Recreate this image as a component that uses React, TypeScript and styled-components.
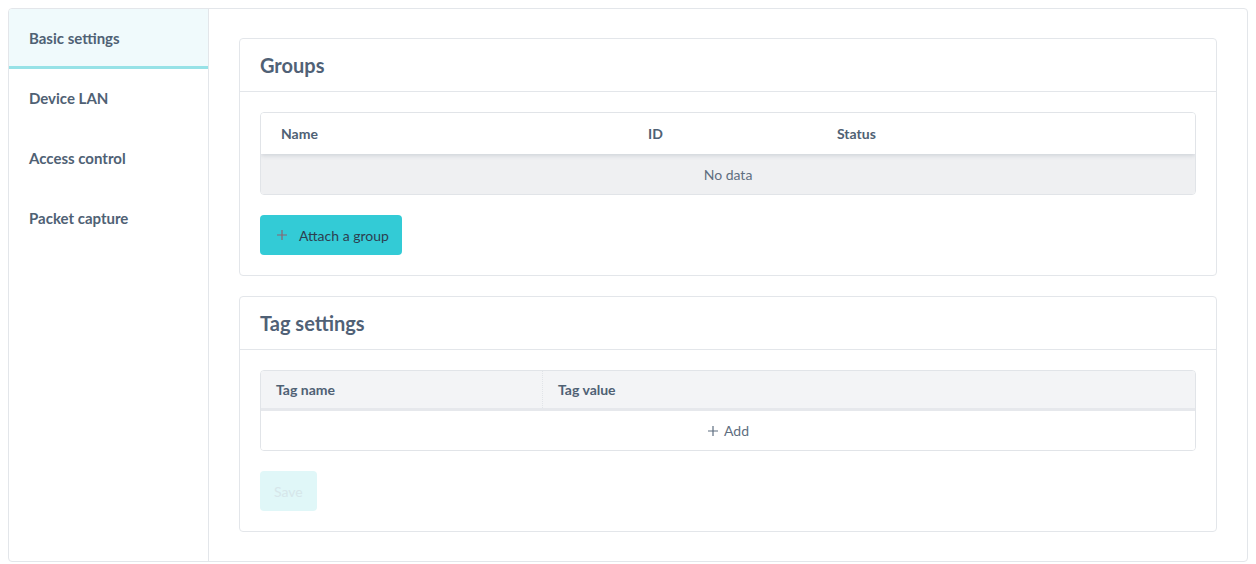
import React from 'react';
import styled, { createGlobalStyle } from 'styled-components';

const GlobalStyle = createGlobalStyle`
  html, body {
    margin: 0;
    padding: 0;
    background: #fff;
  }
  body {
    padding: 8px;
    font-family: Lato, "Open Sans", sans-serif;
    color: #506176;
  }
  * {
    box-sizing: border-box;
  }
`;

const Frame = styled.div`
  display: flex;
  width: 1240px;
  height: 554px;
  border: 1px solid #e3e6ea;
  border-radius: 4px;
  overflow: hidden;
`;

const Sidebar = styled.nav`
  width: 200px;
  flex-shrink: 0;
  border-right: 1px solid #e3e6ea;
  display: flex;
  flex-direction: column;
`;

const NavItem = styled.div<{ $active?: boolean }>`
  height: 60px;
  display: flex;
  align-items: center;
  padding: 1px 0 0 20px;
  font-size: 15px;
  font-weight: 700;
  color: #4f6174;
  background: ${(p) => (p.$active ? '#f0fafc' : 'transparent')};
  border-bottom: 3px solid ${(p) => (p.$active ? '#97e2e7' : 'transparent')};
`;

const Main = styled.main`
  flex: 1;
  padding: 29px 30px 30px 30px;
  display: flex;
  flex-direction: column;
  gap: 20px;
`;

const Card = styled.section`
  border: 1px solid #e3e6ea;
  border-radius: 4px;
  background: #fff;
`;

const CardHeader = styled.header`
  height: 53px;
  display: flex;
  align-items: center;
  padding: 0 20px;
  border-bottom: 1px solid #e3e6ea;
  font-size: 20px;
  font-weight: 700;
  color: #506176;
`;

const CardBody = styled.div`
  padding: 20px;
  display: flex;
  flex-direction: column;
  align-items: flex-start;
  gap: 20px;
`;

const Table = styled.div`
  width: 100%;
  border: 1px solid #e1e4e8;
  border-radius: 4px;
  overflow: hidden;
`;

const HeadRow = styled.div<{ $shaded?: boolean }>`
  display: grid;
  grid-template-columns: ${(p) => (p.$shaded ? '281px 1fr' : '367px 189px 1fr')};
  height: ${(p) => (p.$shaded ? '40px' : '41px')};
  align-items: center;
  background: ${(p) => (p.$shaded ? '#f3f4f6' : '#fff')};
  border-bottom: ${(p) => (p.$shaded ? '3px solid #e6e8ec' : 'none')};
  position: relative;
  z-index: 1;
  box-shadow: ${(p) => (p.$shaded ? 'none' : '0 2px 4px rgba(80, 97, 118, 0.18)')};
`;

const HeadCell = styled.div<{ $divider?: boolean; $pad?: number }>`
  height: 100%;
  display: flex;
  align-items: center;
  padding-left: ${(p) => p.$pad ?? 20}px;
  font-size: 14px;
  font-weight: 700;
  color: #4f6174;
  border-left: ${(p) => (p.$divider ? '1px dotted #e1e4e8' : 'none')};
`;

const EmptyRow = styled.div<{ $grey?: boolean }>`
  height: ${(p) => (p.$grey ? '40px' : '39px')};
  display: flex;
  align-items: center;
  justify-content: center;
  gap: 5px;
  font-size: 14px;
  color: #5e6e80;
  background: ${(p) => (p.$grey ? '#eff0f2' : '#fff')};
`;

const Button = styled.button<{ $disabled?: boolean }>`
  display: inline-flex;
  align-items: center;
  gap: 11px;
  height: 40px;
  padding: 0 ${(p) => (p.$disabled ? '14px' : '13px')} 0 ${(p) => (p.$disabled ? '14px' : '16px')};
  border: none;
  border-radius: 4px;
  font-family: inherit;
  font-size: 14px;
  color: ${(p) => (p.$disabled ? '#d6e6ea' : '#2d3e50')};
  background: ${(p) => (p.$disabled ? '#e0f7f8' : '#33cbd6')};
  cursor: ${(p) => (p.$disabled ? 'default' : 'pointer')};
`;

const PlusIcon = ({ color, size = 12 }: { color: string; size?: number }) => (
  <svg width={size} height={size} viewBox="0 0 12 12" fill="none">
    <path d="M6 1v10M1 6h10" stroke={color} strokeWidth="1.2" />
  </svg>
);

export default function App() {
  return (
    <>
      <GlobalStyle />
      <Frame>
        <Sidebar>
          <NavItem $active>Basic settings</NavItem>
          <NavItem>Device LAN</NavItem>
          <NavItem>Access control</NavItem>
          <NavItem>Packet capture</NavItem>
        </Sidebar>
        <Main>
          <Card>
            <CardHeader>Groups</CardHeader>
            <CardBody>
              <Table>
                <HeadRow>
                  <HeadCell>Name</HeadCell>
                  <HeadCell>ID</HeadCell>
                  <HeadCell>Status</HeadCell>
                </HeadRow>
                <EmptyRow $grey>No data</EmptyRow>
              </Table>
              <Button>
                <PlusIcon color="#8a6470" />
                Attach a group
              </Button>
            </CardBody>
          </Card>
          <Card>
            <CardHeader>Tag settings</CardHeader>
            <CardBody>
              <Table>
                <HeadRow $shaded>
                  <HeadCell $pad={15}>Tag name</HeadCell>
                  <HeadCell $divider $pad={15}>Tag value</HeadCell>
                </HeadRow>
                <EmptyRow>
                  <PlusIcon color="#5e6e80" />
                  Add
                </EmptyRow>
              </Table>
              <Button $disabled>Save</Button>
            </CardBody>
          </Card>
        </Main>
      </Frame>
    </>
  );
}
